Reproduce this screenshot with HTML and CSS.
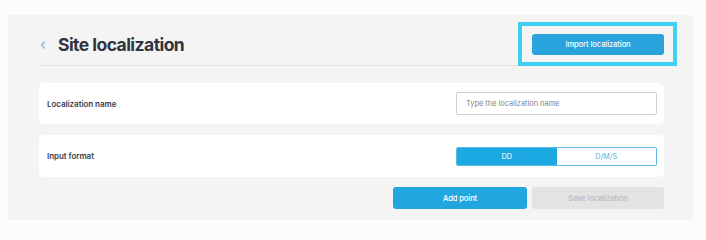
FILE: index.html
```html
<!DOCTYPE html>
<html lang="en">
<head>
<meta charset="utf-8">
<title>Site localization</title>
<link rel="stylesheet" href="styles.css">
</head>
<body>
<div class="page">
  <section class="panel">
    <header class="header">
      <div class="title-group">
        <svg class="back" width="6" height="8" viewBox="0 0 6 8" aria-hidden="true"><path d="M4.5 1 L1.5 4 L4.5 7" fill="none" stroke="#6db9dd" stroke-width="1.2" stroke-linecap="round" stroke-linejoin="round"/></svg>
        <h1 class="title">Site localization</h1>
      </div>
      <div class="import-wrap">
        <button class="btn btn-primary btn-import">Import localization</button>
        <span class="highlight"></span>
      </div>
    </header>

    <div class="card">
      <span class="label">Localization name</span>
      <div class="input">Type the localization name</div>
    </div>

    <div class="card card-format">
      <span class="label">Input format</span>
      <div class="toggle">
        <span class="toggle-opt active">DD</span>
        <span class="toggle-opt">D/M/S</span>
      </div>
    </div>

    <div class="actions">
      <button class="btn btn-primary btn-add">Add point</button>
      <button class="btn btn-disabled">Save localization</button>
    </div>
  </section>
</div>
</body>
</html>
```

FILE: styles.css
```css
* { box-sizing: border-box; }

html, body {
  margin: 0;
  padding: 0;
  background: #fcfcfc;
  font-family: Inter, "Noto Sans", "Liberation Sans", sans-serif;
}

.page {
  padding: 15px 0 0 8px;
  height: 238px;
}

.panel {
  width: 685px;
  height: 205px;
  background: #f4f4f5;
  padding: 19px 29px 11px 31px;
}

.header {
  display: flex;
  align-items: center;
  justify-content: space-between;
  padding-bottom: 10px;
  border-bottom: 1px solid #e3e4e7;
}

.title-group {
  display: flex;
  align-items: center;
  padding-left: 1px;
}

.back {
  display: block;
  margin-right: 12px;
}

.title {
  margin: 0;
  font-size: 17.5px;
  font-weight: 700;
  color: #30343f;
  letter-spacing: -0.55px;
  line-height: 21px;
}

.import-wrap {
  position: relative;
}

.highlight {
  position: absolute;
  left: -14px;
  right: -13px;
  top: -12px;
  bottom: -11px;
  border: 4.5px solid #43cff1;
  pointer-events: none;
}

.btn {
  border: 0;
  border-radius: 3px;
  font-family: Inter, "Noto Sans", "Liberation Sans", sans-serif;
  font-size: 7.6px;
  font-weight: 500;
  height: 22px;
  padding: 0;
  display: flex;
  align-items: center;
  justify-content: center;
  letter-spacing: -0.1px;
}

.btn-primary {
  background: #21a6df;
  color: #ffffff;
}

.btn-import {
  width: 132px;
  height: 21px;
  background: #2aa2db;
}

.card {
  background: #ffffff;
  border-radius: 5px;
  margin-top: 17px;
  height: 41px;
  display: flex;
  align-items: center;
  justify-content: space-between;
  padding: 0 7px 0 8px;
}

.card-format {
  margin-top: 11px;
  height: 42px;
}

.label {
  font-size: 8px;
  font-weight: 600;
  color: #3a3e49;
  letter-spacing: -0.05px;
}

.input {
  width: 201px;
  height: 23px;
  border: 1px solid #cdd1d6;
  border-radius: 2px;
  font-size: 7.4px;
  color: #7d828b;
  display: flex;
  align-items: center;
  padding-left: 9px;
}

.toggle {
  width: 201px;
  height: 19px;
  display: flex;
  border: 1px solid #5ab9e4;
  border-radius: 2px;
  overflow: hidden;
}

.toggle-opt {
  flex: 1;
  display: flex;
  align-items: center;
  justify-content: center;
  font-size: 7.4px;
  color: #5bb2da;
}

.toggle-opt.active {
  background: #1ca9e2;
  color: #ffffff;
}

.actions {
  display: flex;
  justify-content: flex-end;
  gap: 5px;
  margin-top: 10px;
}

.btn-add {
  width: 134px;
}

.btn-disabled {
  width: 132px;
  background: #e3e3e4;
  color: #b9babd;
}
```
